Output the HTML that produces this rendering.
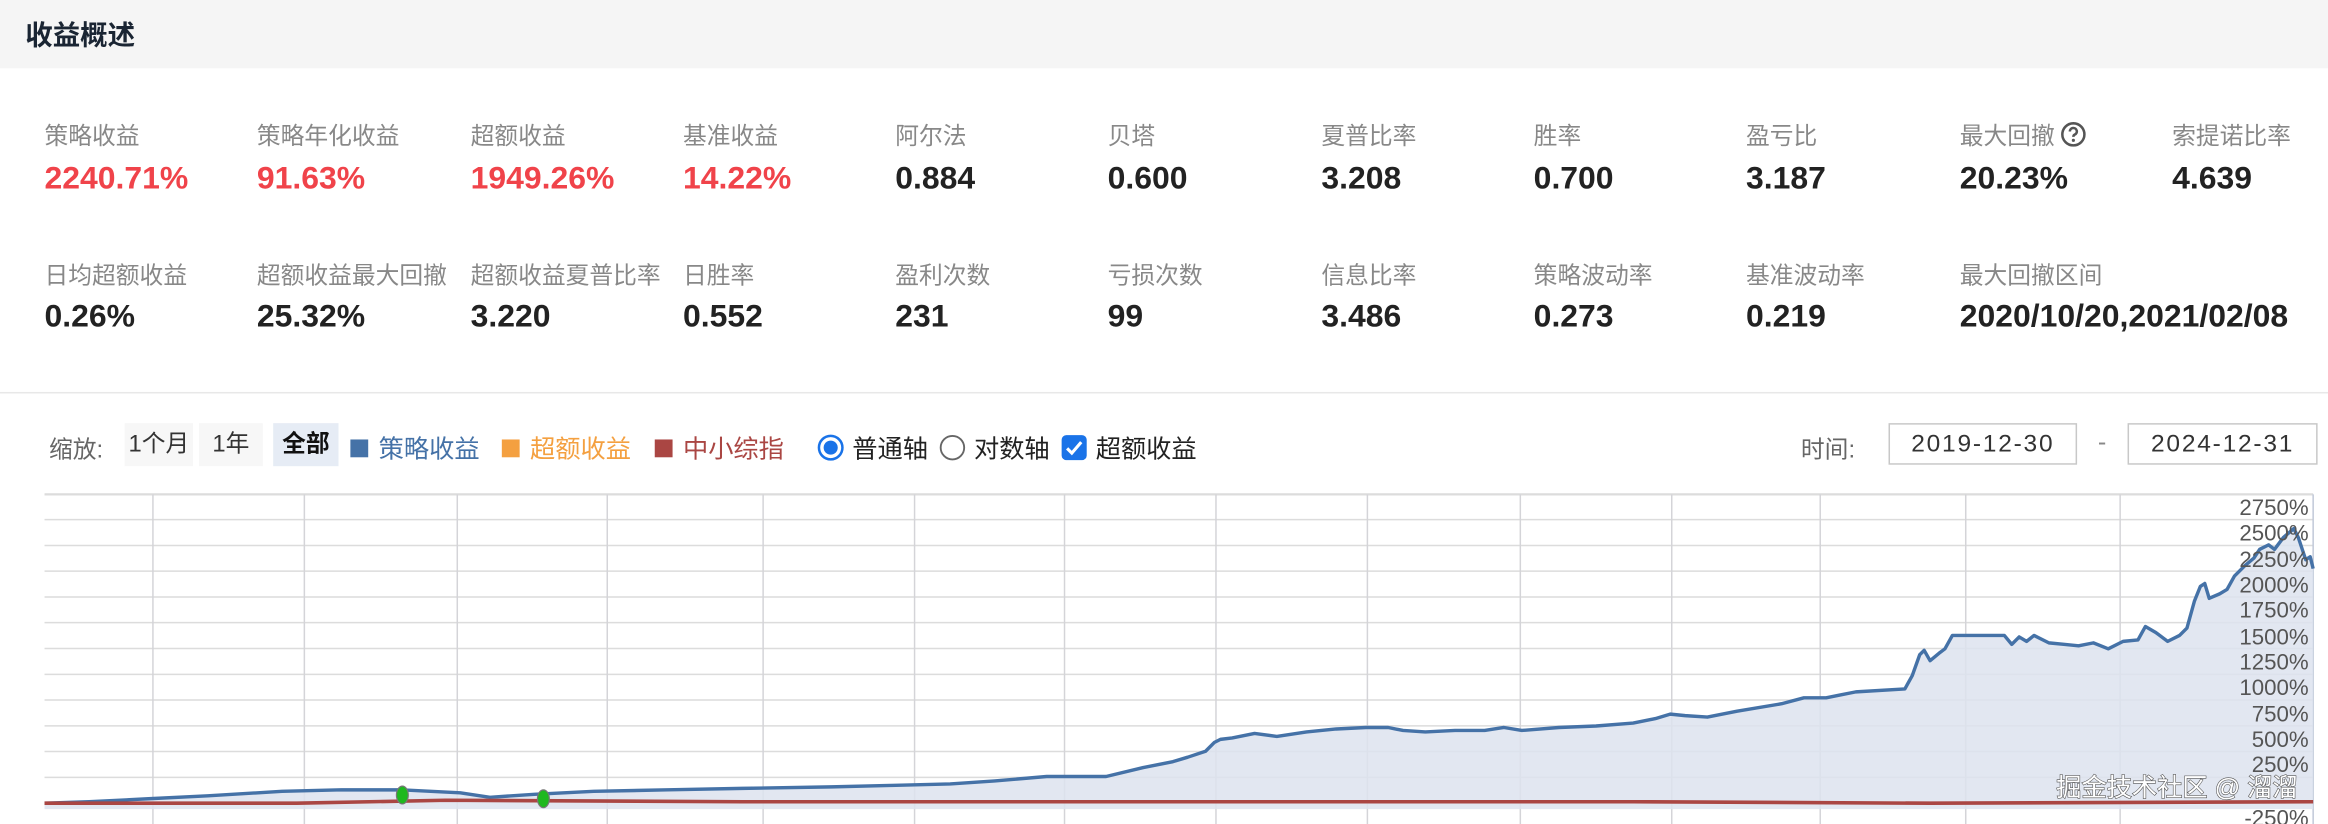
<!DOCTYPE html>
<html><head><meta charset="utf-8"><style>
html,body{margin:0;padding:0;background:#fff;width:2328px;height:824px;overflow:hidden}
#w{position:absolute;left:0;top:0;width:1568px;height:555px;transform:scale(1.48469);transform-origin:0 0;font-family:"Liberation Sans","Noto Sans CJK SC",sans-serif}
.hd{position:absolute;left:0;top:0;width:1568px;height:46px;background:#f5f5f5}
.hd span{position:absolute;left:17px;top:10px;font-size:18.5px;font-weight:bold;color:#1a2533}
.m{position:absolute;white-space:nowrap}
.l{font-size:16px;color:#888}
.v{font-size:21.5px;font-weight:bold;color:#222}
.r{color:#f0434a}
.hr{position:absolute;left:0;top:264px;width:1568px;height:1px;background:#e8e8e8}
.c{position:absolute;font-size:17px;white-space:nowrap;top:288px}
.btn{position:absolute;top:285px;height:29px;line-height:29px;font-size:16px;text-align:center;background:#f7f7f7;color:#333}
.sq{display:inline-block;width:12px;height:12px;margin-right:7px;vertical-align:0}
.box{position:absolute;top:285px;height:28px;border:1px solid #c8c8c8;font-size:16.5px;line-height:27px;text-align:center;color:#333;box-sizing:border-box;letter-spacing:1.2px}
</style></head><body><div id="w">
<div class="hd"><span>收益概述</span></div>

<div class="m l" style="left:30px;top:78px">策略收益</div>
<div class="m l" style="left:173px;top:78px">策略年化收益</div>
<div class="m l" style="left:317px;top:78px">超额收益</div>
<div class="m l" style="left:460px;top:78px">基准收益</div>
<div class="m l" style="left:603px;top:78px">阿尔法</div>
<div class="m l" style="left:746px;top:78px">贝塔</div>
<div class="m l" style="left:890px;top:78px">夏普比率</div>
<div class="m l" style="left:1033px;top:78px">胜率</div>
<div class="m l" style="left:1176px;top:78px">盈亏比</div>
<div class="m l" style="left:1320px;top:78px">最大回撤 <svg width="17" height="17" viewBox="0 0 16 16" style="vertical-align:-2px"><circle cx="8" cy="8" r="7" fill="none" stroke="#555" stroke-width="1.6"/><path d="M5.8 6.2a2.2 2.2 0 1 1 3 2c-.7.3-.8.7-.8 1.4" fill="none" stroke="#555" stroke-width="1.6"/><circle cx="8" cy="11.8" r="1" fill="#555"/></svg></div>
<div class="m l" style="left:1463px;top:78px">索提诺比率</div>

<div class="m v r" style="left:30px;top:108px">2240.71%</div>
<div class="m v r" style="left:173px;top:108px">91.63%</div>
<div class="m v r" style="left:317px;top:108px">1949.26%</div>
<div class="m v r" style="left:460px;top:108px">14.22%</div>
<div class="m v" style="left:603px;top:108px">0.884</div>
<div class="m v" style="left:746px;top:108px">0.600</div>
<div class="m v" style="left:890px;top:108px">3.208</div>
<div class="m v" style="left:1033px;top:108px">0.700</div>
<div class="m v" style="left:1176px;top:108px">3.187</div>
<div class="m v" style="left:1320px;top:108px">20.23%</div>
<div class="m v" style="left:1463px;top:108px">4.639</div>

<div class="m l" style="left:30px;top:172px">日均超额收益</div>
<div class="m l" style="left:173px;top:172px">超额收益最大回撤</div>
<div class="m l" style="left:317px;top:172px">超额收益夏普比率</div>
<div class="m l" style="left:460px;top:172px">日胜率</div>
<div class="m l" style="left:603px;top:172px">盈利次数</div>
<div class="m l" style="left:746px;top:172px">亏损次数</div>
<div class="m l" style="left:890px;top:172px">信息比率</div>
<div class="m l" style="left:1033px;top:172px">策略波动率</div>
<div class="m l" style="left:1176px;top:172px">基准波动率</div>
<div class="m l" style="left:1320px;top:172px">最大回撤区间</div>

<div class="m v" style="left:30px;top:201px">0.26%</div>
<div class="m v" style="left:173px;top:201px">25.32%</div>
<div class="m v" style="left:317px;top:201px">3.220</div>
<div class="m v" style="left:460px;top:201px">0.552</div>
<div class="m v" style="left:603px;top:201px">231</div>
<div class="m v" style="left:746px;top:201px">99</div>
<div class="m v" style="left:890px;top:201px">3.486</div>
<div class="m v" style="left:1033px;top:201px">0.273</div>
<div class="m v" style="left:1176px;top:201px">0.219</div>
<div class="m v" style="left:1320px;top:201px">2020/10/20,2021/02/08</div>

<div class="hr"></div>

<div class="c" style="left:33px;color:#666;font-size:16px;top:289px">缩放:</div>
<div class="btn" style="left:84px;width:46px">1个月</div>
<div class="btn" style="left:134px;width:43px">1年</div>
<div class="btn" style="left:184px;width:44px;background:#e6ecf5;font-weight:bold;color:#111">全部</div>
<div class="c" style="left:236px;color:#4572a7"><span class="sq" style="background:#4572a7"></span>策略收益</div>
<div class="c" style="left:338px;color:#f4a040"><span class="sq" style="background:#f4a040"></span>超额收益</div>
<div class="c" style="left:441px;color:#aa4643"><span class="sq" style="background:#aa4643"></span>中小综指</div>
<div class="c" style="left:550px;color:#222"><svg width="19" height="19" viewBox="0 0 18 18" style="vertical-align:-3px;margin-right:5px"><circle cx="9" cy="9" r="7.5" fill="#fff" stroke="#1a73e8" stroke-width="1.6"/><circle cx="9" cy="9" r="4.5" fill="#1a73e8"/></svg>普通轴</div>
<div class="c" style="left:632px;color:#222"><svg width="19" height="19" viewBox="0 0 18 18" style="vertical-align:-3px;margin-right:5px"><circle cx="9" cy="9" r="7.5" fill="#fff" stroke="#666" stroke-width="1.2"/></svg>对数轴</div>
<div class="c" style="left:714px;color:#222"><svg width="19" height="19" viewBox="0 0 18 18" style="vertical-align:-3px;margin-right:5px"><rect x="1" y="1" width="16" height="16" rx="3" fill="#1a73e8"/><path d="M4.5 9.5l3 3 6-7" fill="none" stroke="#fff" stroke-width="2"/></svg>超额收益</div>

<div class="c" style="left:1213px;color:#666;font-size:16px;top:289px">时间:</div>
<div class="box" style="left:1272px;width:127px">2019-12-30</div>
<div class="c" style="left:1413px;color:#888">-</div>
<div class="box" style="left:1433px;width:128px">2024-12-31</div>

<svg style="position:absolute;left:0;top:0" width="1568" height="555" viewBox="0 0 1568 555">
<g stroke="#dcdcdc" stroke-width="1">
<line x1="30" y1="333" x2="1558" y2="333" stroke-width="1.5"/>
<line x1="30" y1="350" x2="1558" y2="350"/><line x1="30" y1="367.4" x2="1558" y2="367.4"/><line x1="30" y1="384.7" x2="1558" y2="384.7"/><line x1="30" y1="402.1" x2="1558" y2="402.1"/><line x1="30" y1="419.4" x2="1558" y2="419.4"/><line x1="30" y1="436.8" x2="1558" y2="436.8"/><line x1="30" y1="454.2" x2="1558" y2="454.2"/><line x1="30" y1="471.5" x2="1558" y2="471.5"/><line x1="30" y1="488.9" x2="1558" y2="488.9"/><line x1="30" y1="506.2" x2="1558" y2="506.2"/><line x1="30" y1="523.6" x2="1558" y2="523.6"/>
</g>
<g stroke="#d4d4d8" stroke-width="1">
<line x1="103" y1="333" x2="103" y2="555"/><line x1="205" y1="333" x2="205" y2="555"/><line x1="308" y1="333" x2="308" y2="555"/><line x1="409" y1="333" x2="409" y2="555"/><line x1="514" y1="333" x2="514" y2="555"/><line x1="616" y1="333" x2="616" y2="555"/><line x1="717" y1="333" x2="717" y2="555"/><line x1="819" y1="333" x2="819" y2="555"/><line x1="921" y1="333" x2="921" y2="555"/><line x1="1024" y1="333" x2="1024" y2="555"/><line x1="1126" y1="333" x2="1126" y2="555"/><line x1="1226" y1="333" x2="1226" y2="555"/><line x1="1324" y1="333" x2="1324" y2="555"/><line x1="1428" y1="333" x2="1428" y2="555"/>
<line x1="1558" y1="333" x2="1558" y2="555" stroke="#c0c8d8"/>
</g>
<path id="p" d="M30,541 L60,540 L100,538 L140,536 L190,533 L230,532 L270,532 L310,534 L330,537 L360,535 L400,533 L450,532 L500,531 L560,530 L600,529 L640,528 L670,526 L705,523 L745,523 L770,517 L790,513 L800,510 L812,506 L818,500 L822,498 L830,497 L845,494 L860,496 L880,493 L900,491 L920,490 L935,490 L945,492 L960,493 L980,492 L1000,492 L1013,490 L1025,492 L1050,490 L1075,489 L1100,487 L1115,484 L1125,481 L1135,482 L1150,483 L1170,479 L1200,474 L1215,470 L1230,470 L1240,468 L1250,466 L1283,464 L1288,455 L1293,441 L1296,438 L1300,445 L1306,440 L1310,437 L1315,428 L1350,428 L1355,434 L1360,429 L1365,432 L1370,428 L1380,433 L1390,434 L1400,435 L1410,433 L1420,437 L1430,432 L1440,431 L1445,422 L1452,426 L1460,432 L1468,428 L1473,423 L1478,405 L1482,395 L1485,393 L1488,403 L1495,400 L1500,397 L1505,388 L1512,381 L1518,376 L1522,370 L1528,367 L1532,370 L1538,362 L1545,356 L1548,362 L1550,368 L1553,377 L1556,375 L1558,383" fill="none"/>
<path d="M30,541 L60,540 L100,538 L140,536 L190,533 L230,532 L270,532 L310,534 L330,537 L360,535 L400,533 L450,532 L500,531 L560,530 L600,529 L640,528 L670,526 L705,523 L745,523 L770,517 L790,513 L800,510 L812,506 L818,500 L822,498 L830,497 L845,494 L860,496 L880,493 L900,491 L920,490 L935,490 L945,492 L960,493 L980,492 L1000,492 L1013,490 L1025,492 L1050,490 L1075,489 L1100,487 L1115,484 L1125,481 L1135,482 L1150,483 L1170,479 L1200,474 L1215,470 L1230,470 L1240,468 L1250,466 L1283,464 L1288,455 L1293,441 L1296,438 L1300,445 L1306,440 L1310,437 L1315,428 L1350,428 L1355,434 L1360,429 L1365,432 L1370,428 L1380,433 L1390,434 L1400,435 L1410,433 L1420,437 L1430,432 L1440,431 L1445,422 L1452,426 L1460,432 L1468,428 L1473,423 L1478,405 L1482,395 L1485,393 L1488,403 L1495,400 L1500,397 L1505,388 L1512,381 L1518,376 L1522,370 L1528,367 L1532,370 L1538,362 L1545,356 L1548,362 L1550,368 L1553,377 L1556,375 L1558,383 L1558,545 L30,545 Z" fill="#dde3ee" fill-opacity="0.85"/>
<use href="#p" stroke="#4572a7" stroke-width="2.3" stroke-linejoin="round"/>
<path d="M30,541 L200,541 L300,539 L500,540 L800,540 L1100,540 L1300,541 L1558,540" fill="none" stroke="#aa4643" stroke-width="2.4"/>
<ellipse cx="271" cy="535.5" rx="4" ry="6" fill="#1fb81f" stroke="#777" stroke-width="0.8"/>
<ellipse cx="366" cy="538" rx="4" ry="6" fill="#1fb81f" stroke="#777" stroke-width="0.8"/>
<g font-family="Liberation Sans, sans-serif" font-size="15" fill="#555" text-anchor="end">
<text x="1555" y="347">2750%</text><text x="1555" y="364">2500%</text><text x="1555" y="382">2250%</text><text x="1555" y="399">2000%</text><text x="1555" y="416">1750%</text><text x="1555" y="434">1500%</text><text x="1555" y="451">1250%</text><text x="1555" y="468">1000%</text><text x="1555" y="486">750%</text><text x="1555" y="503">500%</text><text x="1555" y="520">250%</text><text x="1555" y="556">-250%</text>
</g>
<text x="1385" y="536" font-family="Liberation Sans, Noto Sans CJK SC, sans-serif" font-size="17" fill="#fff" stroke="#555" stroke-width="0.8" paint-order="stroke">掘金技术社区 @ 溜溜</text>
</svg>
</div></body></html>
